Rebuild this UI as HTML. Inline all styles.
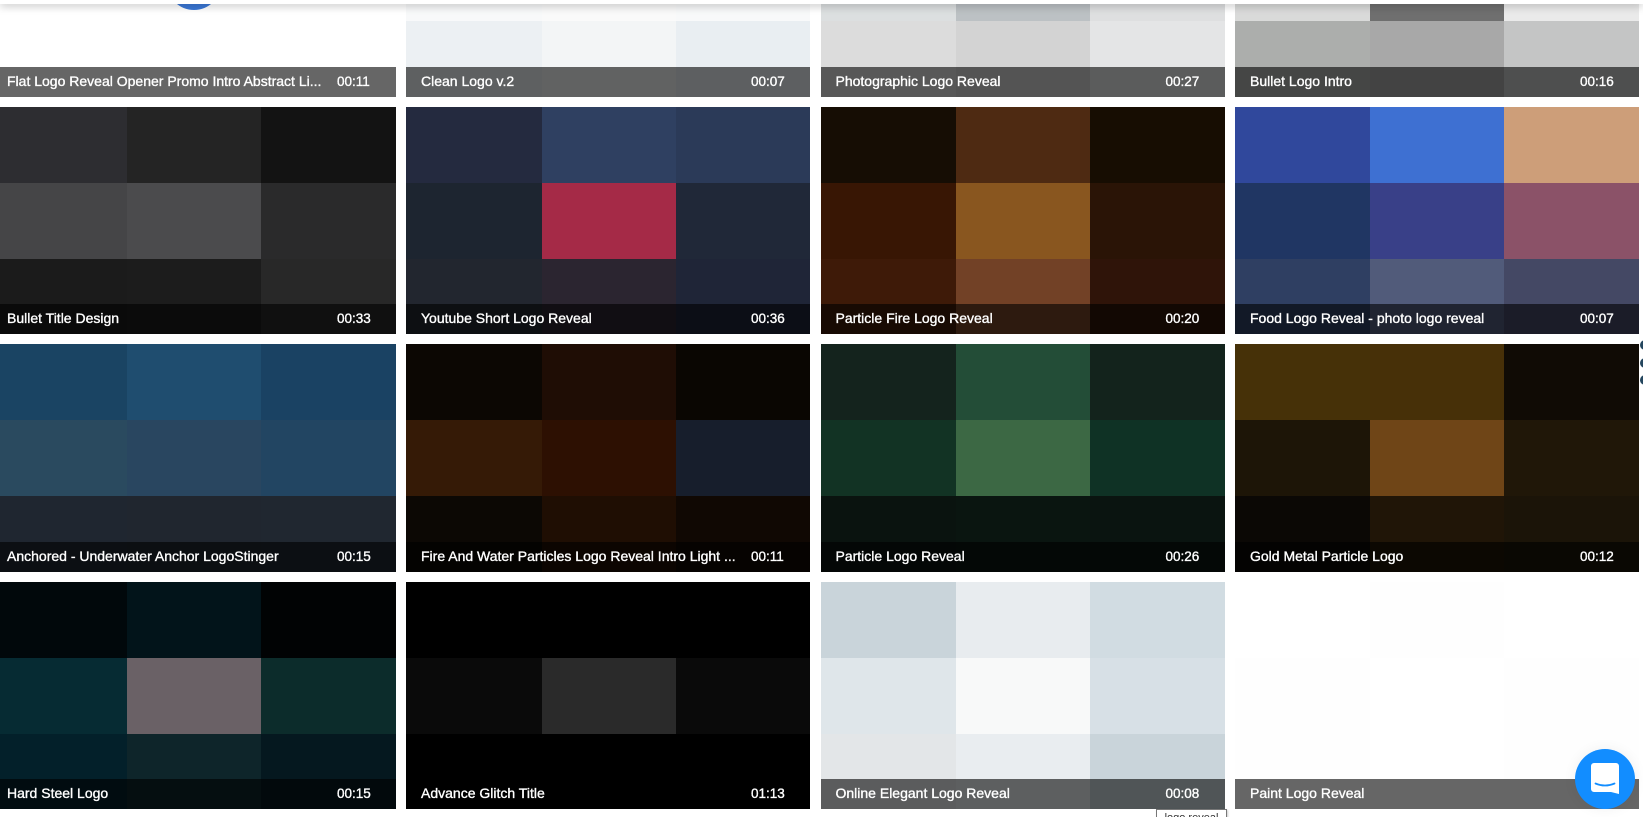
<!DOCTYPE html>
<html>
<head>
<meta charset="utf-8">
<style>
html,body{margin:0;padding:0;background:#fff;width:1643px;height:817px;overflow:hidden}
body{position:relative;font-family:"Liberation Sans",sans-serif}
.c{position:absolute;width:404px;height:227.5px;display:grid;grid-template-columns:135px 134px 135px;grid-template-rows:76px 76px 75.5px;overflow:hidden}
.c.x2{grid-template-columns:135.5px 134.5px 134px}
.c i{display:block}
.b{position:absolute;left:0;right:0;bottom:0;height:30px;background:rgba(0,0,0,.6);color:#fff;font-size:14px;line-height:30px;-webkit-text-stroke:.35px #fff;white-space:nowrap}
.b span{position:absolute;left:15px;top:-1px}
.b b{position:absolute;left:345px;top:0;font-weight:normal;font-size:13.5px}
.x1{left:-8px}.x2{left:406px}.x3{left:820.5px}.x4{left:1235px}
.y1{top:-131px}.y2{top:106.5px}.y3{top:344px}.y4{top:581.5px}
#top{position:absolute;left:0;top:0;width:1643px;height:4px;background:#fff;box-shadow:0 1px 9px rgba(0,0,0,.38)}
#circle{position:absolute;left:167px;top:-44px;width:54px;height:54px;border-radius:50%;background:#3b78d8}
#chat{position:absolute;left:1575px;top:749px;width:60px;height:60px;border-radius:50%;background:#128dff;box-shadow:0 0 14px rgba(0,0,0,.06)}
#tip{position:absolute;left:1156px;top:809px;width:69px;height:20px;border:1px solid #777;background:#fff;font-size:11px;color:#333;line-height:17px;text-align:center;overflow:hidden;box-shadow:1px 1px 2px rgba(0,0,0,.2)}
.d{position:absolute;left:1640px;width:10px;height:10px;border-radius:50%;background:#24465e}
</style>
</head>
<body>
<div class="c x1 y1" style="background:#fff"><i></i><i></i><i></i><i></i><i></i><i></i><i></i><i></i><i></i><div class="b"><span>Flat Logo Reveal Opener Promo Intro Abstract Li...</span><b>00:11</b></div></div>
<div id="circle"></div>
<div class="c x2 y1"><i style="background:#f8f9fa"></i><i style="background:#fafafa"></i><i style="background:#f8f9fa"></i><i style="background:#f8f9fa"></i><i style="background:#fafafa"></i><i style="background:#f8f9fa"></i><i style="background:#ecf0f3"></i><i style="background:#f3f5f6"></i><i style="background:#e9eef2"></i><div class="b"><span>Clean Logo v.2</span><b>00:07</b></div></div>
<div class="c x3 y1"><i style="background:#ddd"></i><i style="background:#ccc"></i><i style="background:#ddd"></i><i style="background:#dcdfe0"></i><i style="background:#bcc1c4"></i><i style="background:#dedfe0"></i><i style="background:#dcdcdc"></i><i style="background:#d3d3d3"></i><i style="background:#e4e5e6"></i><div class="b"><span>Photographic Logo Reveal</span><b>00:27</b></div></div>
<div class="c x4 y1"><i style="background:#ddd"></i><i style="background:#777"></i><i style="background:#eee"></i><i style="background:#d9dad9"></i><i style="background:#6f6f6f"></i><i style="background:#eaeaea"></i><i style="background:#acaeac"></i><i style="background:#a8a8a8"></i><i style="background:#c4c5c5"></i><div class="b"><span>Bullet Logo Intro</span><b>00:16</b></div></div>

<div class="c x1 y2"><i style="background:#2d2d31"></i><i style="background:#242424"></i><i style="background:#131313"></i><i style="background:#454547"></i><i style="background:#4b4b4d"></i><i style="background:#2a2a2b"></i><i style="background:#1b1b1b"></i><i style="background:#1c1c1c"></i><i style="background:#282828"></i><div class="b"><span>Bullet Title Design</span><b>00:33</b></div></div>
<div class="c x2 y2"><i style="background:#242a3f"></i><i style="background:#2f4061"></i><i style="background:#2b3a58"></i><i style="background:#1d2530"></i><i style="background:#a52a47"></i><i style="background:#202838"></i><i style="background:#22262f"></i><i style="background:#2b2530"></i><i style="background:#1f2537"></i><div class="b"><span>Youtube Short Logo Reveal</span><b>00:36</b></div></div>
<div class="c x3 y2"><i style="background:#160d04"></i><i style="background:#4e2a12"></i><i style="background:#170d02"></i><i style="background:#381604"></i><i style="background:#89561f"></i><i style="background:#2a1406"></i><i style="background:#3e1a08"></i><i style="background:#724126"></i><i style="background:#2f1409"></i><div class="b"><span>Particle Fire Logo Reveal</span><b>00:20</b></div></div>
<div class="c x4 y2"><i style="background:#30489c"></i><i style="background:#3e70d2"></i><i style="background:#cd9e79"></i><i style="background:#203663"></i><i style="background:#394088"></i><i style="background:#8b5268"></i><i style="background:#2f3f62"></i><i style="background:#515b7a"></i><i style="background:#444864"></i><div class="b"><span>Food Logo Reveal - photo logo reveal</span><b>00:07</b></div></div>

<div class="c x1 y3"><i style="background:#1a4463"></i><i style="background:#1f4d6f"></i><i style="background:#1a4263"></i><i style="background:#2a4a5f"></i><i style="background:#294660"></i><i style="background:#224562"></i><i style="background:#1f2630"></i><i style="background:#20262f"></i><i style="background:#202730"></i><div class="b"><span>Anchored - Underwater Anchor LogoStinger</span><b>00:15</b></div></div>
<div class="c x2 y3"><i style="background:#0c0703"></i><i style="background:#1f0d05"></i><i style="background:#0a0602"></i><i style="background:#351a06"></i><i style="background:#2d1002"></i><i style="background:#171e2c"></i><i style="background:#0c0804"></i><i style="background:#1f0e03"></i><i style="background:#100803"></i><div class="b"><span>Fire And Water Particles Logo Reveal Intro Light ...</span><b>00:11</b></div></div>
<div class="c x3 y3"><i style="background:#14231d"></i><i style="background:#234d37"></i><i style="background:#13231c"></i><i style="background:#123324"></i><i style="background:#3c6844"></i><i style="background:#0f3225"></i><i style="background:#0a130f"></i><i style="background:#0a1510"></i><i style="background:#0a1410"></i><div class="b"><span>Particle Logo Reveal</span><b>00:26</b></div></div>
<div class="c x4 y3"><i style="background:#463108"></i><i style="background:#473008"></i><i style="background:#100b05"></i><i style="background:#1d1507"></i><i style="background:#6f4517"></i><i style="background:#201708"></i><i style="background:#0b0805"></i><i style="background:#201507"></i><i style="background:#1b1408"></i><div class="b"><span>Gold Metal Particle Logo</span><b>00:12</b></div></div>

<div class="c x1 y4"><i style="background:#01080b"></i><i style="background:#02141a"></i><i style="background:#010304"></i><i style="background:#062b33"></i><i style="background:#6a6166"></i><i style="background:#0c2c2b"></i><i style="background:#03202a"></i><i style="background:#0e252a"></i><i style="background:#05181f"></i><div class="b"><span>Hard Steel Logo</span><b>00:15</b></div></div>
<div class="c x2 y4"><i style="background:#000"></i><i style="background:#000"></i><i style="background:#000"></i><i style="background:#0a0a0a"></i><i style="background:#2a2a2a"></i><i style="background:#0a0a0a"></i><i style="background:#000"></i><i style="background:#000"></i><i style="background:#000"></i><div class="b"><span>Advance Glitch Title</span><b>01:13</b></div></div>
<div class="c x3 y4"><i style="background:#c9d4da"></i><i style="background:#e8ecef"></i><i style="background:#d1dce2"></i><i style="background:#dfe6ea"></i><i style="background:#f8f9f9"></i><i style="background:#d7e0e6"></i><i style="background:#e3e6e8"></i><i style="background:#e9edf0"></i><i style="background:#c9d4da"></i><div class="b"><span>Online Elegant Logo Reveal</span><b>00:08</b></div></div>
<div class="c x4 y4" style="background:#fff"><i style="background:#fff"></i><i style="background:#fefefe"></i><i style="background:#fff"></i><i style="background:#fefefe"></i><i style="background:#fff"></i><i style="background:#fefefe"></i><i style="background:#fefefe"></i><i style="background:#fff"></i><i style="background:#fefefe"></i><div class="b"><span>Paint Logo Reveal</span></div></div>

<div id="top"></div>
<div class="d" style="top:340px"></div>
<div class="d" style="top:358px"></div>
<div class="d" style="top:375px"></div>
<div id="tip">logo reveal</div>
<div id="chat"><svg width="60" height="60" viewBox="0 0 60 60"><path d="M19 14H41A3 3 0 0 1 44 17V45L36 43H19A3 3 0 0 1 16 40V17A3 3 0 0 1 19 14Z" fill="#fff"/><path d="M20.5 34.5Q30 38.5 39.5 34.5" fill="none" stroke="#128dff" stroke-width="1.8" stroke-linecap="round"/></svg></div>
</body>
</html>
